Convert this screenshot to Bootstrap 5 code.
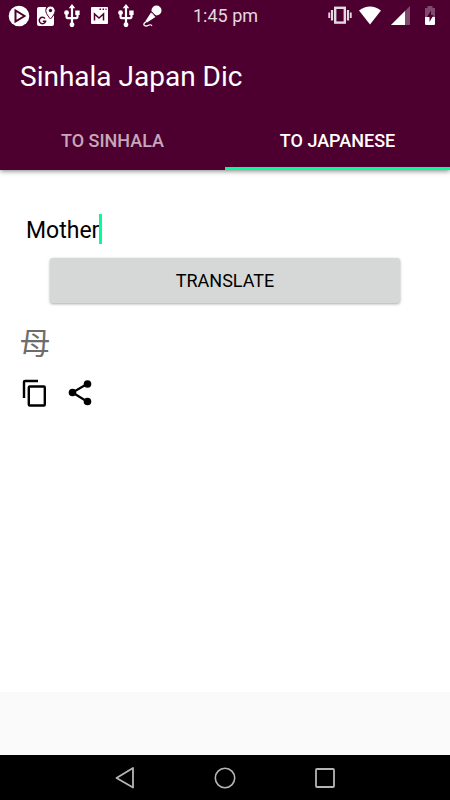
<!DOCTYPE html>
<html lang="en">
<head>
<meta charset="utf-8">
<meta name="viewport" content="width=device-width, initial-scale=1">
<title>Sinhala Japan Dic</title>
<link href="https://cdn.jsdelivr.net/npm/bootstrap@5.3.0/dist/css/bootstrap.min.css" rel="stylesheet">
<style>
  body { font-family: Roboto, "Noto Sans CJK JP", sans-serif; color: #000; }
  svg { display: block; flex: none; }
  .app-head { background: #4d0030; color: #fff; box-shadow: 0 1px 5px rgba(0,0,0,.5); z-index: 1; }
  .status { height: 32px; padding: 0 7px 0 8px; }
  .status-side { flex: 1 1 0; }
  .clock { font-size: 18px; line-height: 32px; color: #e4d9e0; }
  .app-title { font-size: 28px; line-height: 32px; padding: 29px 20px 19px; }
  .tab-btn { background: none; border: 0; border-bottom: 3px solid transparent; border-radius: 0; height: 58px; padding: 2px 0 0; font-size: 18px; font-weight: 500; color: #c5a8ba; }
  .tab-btn.active { color: #fff; border-color: #0f9; }
  .page-body { padding: 40px 20px 0; }
  .word-field { padding: 0 6px; }
  .word-input { border: 0; outline: 0; background: none; width: 100%; padding: 0; font-size: 23px; line-height: 32px; height: 40px; color: #000; }
  .caret { left: 79px; top: 4px; width: 3px; height: 30px; background: #0f9; }
  .translate-btn { margin: 8px 30px 0; height: 45px; padding: 0; background: #d6d8d7; color: #000; border: 0; border-radius: 3px; font-size: 18px; box-shadow: 0 1px 3px rgba(0,0,0,.35); }
  .result { font-size: 30px; line-height: 40px; color: #6d6d6d; margin-top: 21px; }
  .actions { gap: 18px; margin-top: 14px; }
  .plain-btn { background: none; border: 0; padding: 0; color: inherit; }
  .ad-space { height: 63px; background: #fafafa; }
  .sys-nav { height: 45px; background: #000; gap: 76px; color: #b5b5b5; }
</style>
<script src="https://cdn.jsdelivr.net/npm/bootstrap@5.3.0/dist/js/bootstrap.bundle.min.js"></script>
</head>
<body>
<div class="d-flex flex-column min-vh-100">
  <header class="app-head position-relative">
    <div class="status d-flex align-items-center">
      <div class="status-side d-flex align-items-center gap-1">
        <svg width="22" height="22" viewBox="0 0 22 22"><circle cx="11" cy="11" r="10.3" fill="#fff"/><path d="M7.500 5.500v11l9-5.500z" fill="none" stroke="#4d0030" stroke-width="2"/></svg>
        <svg width="22" height="24" viewBox="0 0 22 24"><path d="M5 3h7c-1 4 1 7 4 11l4-3v9q0 2-2 2H5q-2 0-2-2V5q0-2 2-2z" fill="#fff"/><path d="M16.500 2a4.700 4.700 0 0 0-4.700 4.700c0 3.300 4.700 8.300 4.700 8.300s4.700-5 4.700-8.300A4.700 4.700 0 0 0 16.500 2z" fill="#fff" stroke="#4d0030" stroke-width="1"/><circle cx="16.500" cy="6.500" r="1.700" fill="#4d0030"/><path d="M11 14.500a3.200 3.200 0 1 0 .6 2.800H8.800" fill="none" stroke="#4d0030" stroke-width="1.500"/></svg>
        <svg width="24" height="24" viewBox="1 1 22 22" fill="#fff"><path d="M15 7v4h1v2h-3V5h2l-3-4-3 4h2v8H8v-2.070c.7-.37 1.200-1.080 1.200-1.930a2.200 2.200 0 1 0-4.400 0c0 .85.5 1.560 1.200 1.930V13c0 1.110.89 2 2 2h3v3.050c-.71.370-1.200 1.100-1.200 1.950a2.200 2.200 0 1 0 4.400 0c0-.85-.49-1.580-1.200-1.950V15h3c1.110 0 2-.89 2-2v-2h1V7z"/></svg>
        <svg width="22" height="22" viewBox="0 0 22 22"><rect x="3" y="2" width="17" height="17" rx="1" fill="#fff"/><path d="M6.500 15.500V9l4.500 4 4.500-4v6.500" fill="none" stroke="#4d0030" stroke-width="1.500"/><path d="M11.500 4.200h1.500M14.500 4.200h1.500M17.500 4.200h1" stroke="#4d0030" stroke-width="1.500"/></svg>
        <svg width="24" height="24" viewBox="1 1 22 22" fill="#fff"><path d="M15 7v4h1v2h-3V5h2l-3-4-3 4h2v8H8v-2.070c.7-.37 1.200-1.080 1.200-1.930a2.200 2.200 0 1 0-4.400 0c0 .85.5 1.560 1.200 1.930V13c0 1.110.89 2 2 2h3v3.050c-.71.370-1.200 1.100-1.200 1.950a2.200 2.200 0 1 0 4.400 0c0-.85-.49-1.580-1.200-1.950V15h3c1.110 0 2-.89 2-2v-2h1V7z"/></svg>
        <svg width="22" height="24" viewBox="0 0 22 24"><circle cx="14.500" cy="6.500" r="5" fill="#fff"/><path d="M9 8.500 3.500 17l1.500 1.500 8.500-5.500z" fill="#fff"/><path d="m9.500 7.500 5 5" stroke="#4d0030" stroke-width=".8"/><path d="m5 17-2.500 2c-2 2 1 4 3.500 2.500s3-1 4 .500" fill="none" stroke="#fff" stroke-width="1.300"/></svg>
      </div>
      <time class="clock">1:45 pm</time>
      <div class="status-side d-flex align-items-center justify-content-end gap-1">
        <svg width="26" height="24" viewBox="0 0 26 24" fill="none" stroke="#e4d9e0"><rect x="8.200" y="3.800" width="9.600" height="14.800" stroke-width="2.400"/><path d="M5 6v10.500M21 6v10.500" stroke-width="2.200"/><path d="M2.200 8.500v5.500M23.800 8.500v5.500" stroke-width="1.800"/></svg>
        <svg width="26" height="24" viewBox="0 0 26 24"><path d="M2 6.500q11-8 22 0L13 20.500z" fill="#fff"/></svg>
        <svg width="26" height="24" viewBox="0 0 26 24"><path d="M4 21h19V2z" fill="#7f4a6b"/><path d="M4 21h14V7z" fill="#fff"/></svg>
        <svg width="26" height="24" viewBox="0 0 26 24"><path d="M10.500 2h5v2H18v9H8V4h2.500z" fill="#7f4a6b"/><path d="M8 13h10v7q0 1-1 1H9q-1 0-1-1z" fill="#fff"/><path d="M14 6.500v4.500h2.500L12.500 18v-5H10z" fill="#4d0030"/></svg>
      </div>
    </div>
    <h1 class="app-title fw-normal m-0">Sinhala Japan Dic</h1>
    <nav class="d-flex" role="tablist">
      <button class="tab-btn flex-fill w-50" type="button" role="tab" aria-selected="false">TO SINHALA</button>
      <button class="tab-btn active flex-fill w-50" type="button" role="tab" aria-selected="true">TO JAPANESE</button>
    </nav>
  </header>
  <main class="page-body flex-grow-1 d-flex flex-column bg-white">
    <div class="word-field position-relative">
      <input class="word-input" type="text" value="Mother" aria-label="Word to translate">
      <span class="caret position-absolute"></span>
    </div>
    <button class="translate-btn btn" type="button">TRANSLATE</button>
    <div class="result" lang="ja">母</div>
    <div class="actions d-flex align-items-center">
      <button class="plain-btn" type="button" aria-label="Copy"><svg width="28" height="30" viewBox="0 0 28 30" fill="none" stroke="currentColor" stroke-width="2.400"><path d="M4 20V4q0-1 1-1h13"/><rect x="8.800" y="8.500" width="16" height="19" rx="1"/></svg></button>
      <button class="plain-btn" type="button" aria-label="Share"><svg width="28" height="30" viewBox="0 0 28 30"><path d="M21 6 6.500 14.500 21 23.500" fill="none" stroke="currentColor" stroke-width="2.200"/><g fill="currentColor"><circle cx="21.500" cy="6" r="3.800"/><circle cx="6.500" cy="14.500" r="3.800"/><circle cx="21.500" cy="23.500" r="3.800"/></g></svg></button>
    </div>
  </main>
  <div class="ad-space"></div>
  <footer class="sys-nav d-flex align-items-center justify-content-center">
    <button class="plain-btn" type="button" aria-label="Back"><svg width="24" height="24" viewBox="0 0 24 24" fill="none" stroke="currentColor" stroke-width="1.800" stroke-linejoin="round"><path d="M20 2v19.500L3.500 12z"/></svg></button>
    <button class="plain-btn" type="button" aria-label="Home"><svg width="24" height="24" viewBox="0 0 24 24" fill="none" stroke="currentColor" stroke-width="1.600"><circle cx="12" cy="12" r="9.700"/></svg></button>
    <button class="plain-btn" type="button" aria-label="Recent apps"><svg width="24" height="24" viewBox="0 0 24 24" fill="none" stroke="currentColor" stroke-width="1.800"><rect x="3" y="3" width="18" height="18" rx="1"/></svg></button>
  </footer>
</div>
</body>
</html>
